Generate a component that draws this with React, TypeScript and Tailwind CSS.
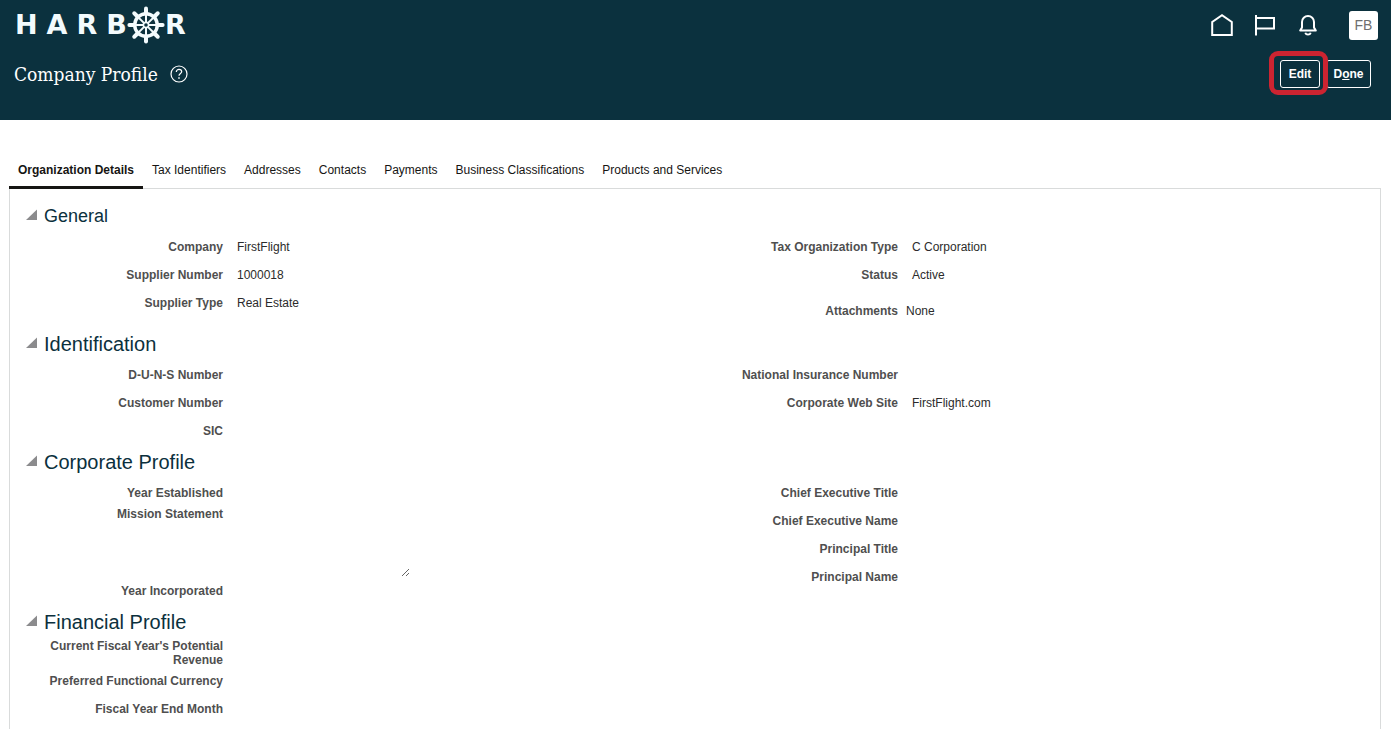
import { useState } from "react";
import type { ReactNode } from "react";

const SPOKES = [0, 45, 90, 135, 180, 225, 270, 315];

function Wheel() {
  return (
    <svg viewBox="-19 -19 38 38" className="h-[38px] w-[38px] shrink-0" fill="none" stroke="currentColor" aria-hidden="true">
      <circle r="11.3" strokeWidth="3.4" />
      <circle r="2.6" strokeWidth="1.6" />
      {SPOKES.map((angle) => (
        <g key={angle} transform={`rotate(${angle})`}>
          <path d="M0 -3V-11" strokeWidth="2" />
          <path d="M0 -12V-16.6" strokeWidth="4" strokeLinecap="round" />
        </g>
      ))}
    </svg>
  );
}

function Logo() {
  return (
    <a
      href="#"
      aria-label="Harbor"
      className="flex items-center font-['DejaVu_Sans',sans-serif] text-[27px] leading-[38px] font-bold text-[#f3fbfd]"
    >
      <span className="flex gap-[9px]">
        <span>H</span>
        <span>A</span>
        <span>R</span>
        <span>B</span>
      </span>
      <Wheel />
      <span>R</span>
    </a>
  );
}

function HomeIcon() {
  return (
    <svg viewBox="0 0 24 24" className="size-6" fill="none" stroke="currentColor" strokeWidth="2" aria-hidden="true">
      <path d="M2.2 22V9L12 2.200l9.800 6.800v13z" />
    </svg>
  );
}

function FlagIcon() {
  return (
    <svg viewBox="0 0 24 24" className="size-6" fill="none" stroke="currentColor" strokeWidth="2" aria-hidden="true">
      <path d="M3 2v20.500M3 5h18v10.500H3" />
    </svg>
  );
}

function BellIcon() {
  return (
    <svg viewBox="0 0 24 24" className="size-6" fill="none" stroke="currentColor" strokeWidth="2" aria-hidden="true">
      <path d="M4.2 17.6L6 14.4V9a6 6 0 0 1 12 0v5.4l1.8 3.2z" strokeLinejoin="round" />
      <path d="M9.3 19.700c.4 1.200 1.400 1.900 2.700 1.900s2.300-.7 2.700-1.900" />
    </svg>
  );
}

function HelpIcon() {
  return (
    <svg viewBox="0 0 18 18" className="size-[18px]" fill="none" stroke="currentColor" strokeWidth="1.2" aria-hidden="true">
      <circle cx="9" cy="9" r="8" />
      <path d="M6.300 6.900c0-1.500 1.200-2.500 2.700-2.500s2.700 1 2.700 2.300c0 1.700-2.700 1.900-2.700 4" />
      <path d="M9 12.200v1.500" strokeWidth="1.500" />
    </svg>
  );
}

const TABS = [
  "Organization Details",
  "Tax Identifiers",
  "Addresses",
  "Contacts",
  "Payments",
  "Business Classifications",
  "Products and Services",
];

function Field({ label, value }: { label: string; value?: string }) {
  return (
    <div className="flex min-h-7 items-center gap-[14px]">
      <dt className="w-[197px] shrink-0 text-right font-bold text-[#4f4f4f]">{label}</dt>
      <dd className="text-[#2b2b2b]">{value}</dd>
    </div>
  );
}

function Section({ title, small, children }: { title: string; small?: boolean; children: ReactNode }) {
  const [open, setOpen] = useState(true);
  return (
    <section>
      <h2 className={small ? "text-lg text-[#0b303d]" : "text-xl text-[#0b303d]"}>
        <button type="button" aria-expanded={open} onClick={() => setOpen(!open)} className="flex h-[34px] items-center gap-[6px]">
          <svg viewBox="0 0 12 12" className={open ? "mb-0.5 size-3" : "mb-0.5 size-3 -rotate-45"} aria-hidden="true">
            <path d="M11 0.500V11H0z" fill="#8b8b8d" />
          </svg>
          {title}
        </button>
      </h2>
      {open && <div className="grid grid-cols-2">{children}</div>}
    </section>
  );
}

export default function App() {
  const [tab, setTab] = useState(TABS[0]);
  return (
    <div className="min-h-screen bg-white font-['Liberation_Sans',Arial,sans-serif] text-xs leading-[14px]">
      <header className="h-[120px] bg-[#0b313e] text-white">
        <div className="flex h-[50px] items-center justify-between pr-[13px] pl-[15px]">
          <Logo />
          <div className="flex items-center gap-[19px]">
            <button type="button" aria-label="Home"><HomeIcon /></button>
            <button type="button" aria-label="Watchlist"><FlagIcon /></button>
            <button type="button" aria-label="Notifications"><BellIcon /></button>
            <button
              type="button"
              aria-label="Account FB"
              className="ml-[10px] size-[29px] rounded-[3px] bg-white text-sm text-[#6f6f6f]"
            >
              FB
            </button>
          </div>
        </div>
        <div className="flex h-12 items-center justify-between pr-5 pl-[14px]">
          <div className="flex items-center gap-3">
            <h1 className="font-['DejaVu_Serif_Condensed','Liberation_Serif',Georgia,serif] text-[19px] leading-7">Company Profile</h1>
            <button type="button" aria-label="Help"><HelpIcon /></button>
          </div>
          <div className="flex gap-[6px]">
            <div className="relative">
              <button type="button" className="h-7 w-10 rounded-[3px] border border-white font-bold">Edit</button>
              <span className="pointer-events-none absolute -top-[9px] -right-2 -bottom-[7px] -left-[11px] rounded-[9px] border-[5px] border-[#cc2431]" />
            </div>
            <button type="button" className="h-7 w-[45px] rounded-[3px] border border-white font-bold">
              D<span className="underline">o</span>ne
            </button>
          </div>
        </div>
      </header>

      <main className="pt-8 pr-[10px] pl-[9px]">
        <div role="tablist" className="flex h-9">
          {TABS.map((name) => (
            <button
              key={name}
              type="button"
              role="tab"
              aria-selected={tab === name}
              onClick={() => setTab(name)}
              className={
                tab === name
                  ? "relative z-10 -mb-px border-b-3 border-[#161513] px-[9px] pt-0.5 font-bold text-[#161513]"
                  : "-mb-px border-b-3 border-transparent px-[9px] pt-0.5 text-[#161513]"
              }
            >
              {name}
            </button>
          ))}
        </div>
        <div role="tabpanel" className="border border-b-0 border-[#d9dbdb] pt-[10px] pr-1 pb-[6px] pl-4">
          <Section title="General" small>
            <dl>
              <Field label="Company" value="FirstFlight" />
              <Field label="Supplier Number" value="1000018" />
              <Field label="Supplier Type" value="Real Estate" />
            </dl>
            <dl>
              <Field label="Tax Organization Type" value="C Corporation" />
              <Field label="Status" value="Active" />
              <div className="flex gap-2 pt-[15px] pb-[9px]">
                <dt className="w-[197px] shrink-0 text-right font-bold text-[#4f4f4f]">Attachments</dt>
                <dd className="text-[#2b2b2b]">None</dd>
              </div>
            </dl>
          </Section>
          <Section title="Identification">
            <dl>
              <Field label="D-U-N-S Number" />
              <Field label="Customer Number" />
              <Field label="SIC" />
            </dl>
            <dl>
              <Field label="National Insurance Number" />
              <Field label="Corporate Web Site" value="FirstFlight.com" />
            </dl>
          </Section>
          <Section title="Corporate Profile">
            <dl>
              <Field label="Year Established" />
              <div className="flex h-[70px] gap-[14px]">
                <dt className="w-[197px] shrink-0 text-right font-bold text-[#4f4f4f]">
                  <label htmlFor="mission">Mission Statement</label>
                </dt>
                <dd>
                  <textarea id="mission" className="block h-[70px] w-[173px] resize overflow-hidden text-[#2b2b2b] outline-none" />
                </dd>
              </div>
              <Field label="Year Incorporated" />
            </dl>
            <dl>
              <Field label="Chief Executive Title" />
              <Field label="Chief Executive Name" />
              <Field label="Principal Title" />
              <Field label="Principal Name" />
            </dl>
          </Section>
          <Section title="Financial Profile">
            <dl>
              <Field label="Current Fiscal Year's Potential Revenue" />
              <Field label="Preferred Functional Currency" />
              <Field label="Fiscal Year End Month" />
            </dl>
          </Section>
        </div>
      </main>
    </div>
  );
}
